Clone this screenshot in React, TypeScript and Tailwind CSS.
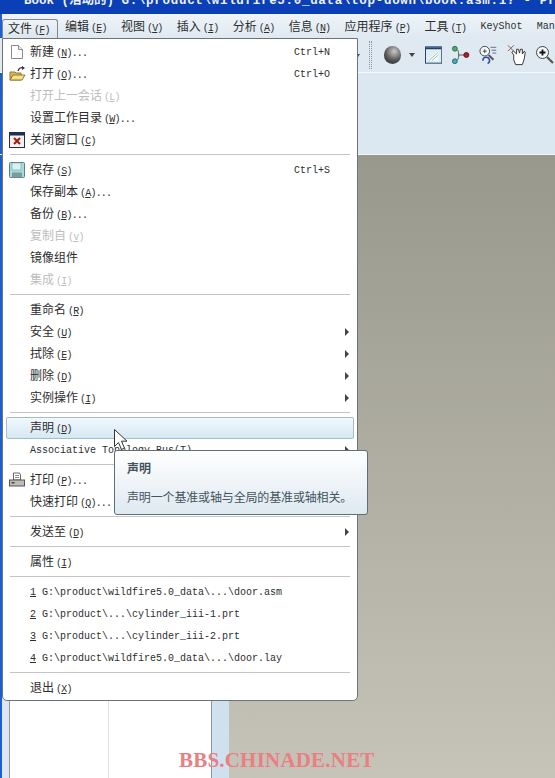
const mono = "font-['Liberation_Mono','Noto_Sans_CJK_SC',monospace]";

type Row =
  | { kind: "sep" }
  | {
      kind?: "item";
      cjk?: string;
      latin?: string;
      key?: string;
      dots?: boolean;
      off?: boolean;
      sub?: boolean;
      short?: string;
      icon?: "new" | "open" | "close" | "save" | "print";
      hot?: boolean;
    };

const rows: Row[] = [
  { cjk: "新建", key: "N", dots: true, short: "Ctrl+N", icon: "new" },
  { cjk: "打开", key: "O", dots: true, short: "Ctrl+O", icon: "open" },
  { cjk: "打开上一会话", key: "L", off: true },
  { cjk: "设置工作目录", key: "W", dots: true },
  { cjk: "关闭窗口", key: "C", icon: "close" },
  { kind: "sep" },
  { cjk: "保存", key: "S", short: "Ctrl+S", icon: "save" },
  { cjk: "保存副本", key: "A", dots: true },
  { cjk: "备份", key: "B", dots: true },
  { cjk: "复制自", key: "v", off: true },
  { cjk: "镜像组件" },
  { cjk: "集成", key: "I", off: true },
  { kind: "sep" },
  { cjk: "重命名", key: "R" },
  { cjk: "安全", key: "U", sub: true },
  { cjk: "拭除", key: "E", sub: true },
  { cjk: "删除", key: "D", sub: true },
  { cjk: "实例操作", key: "I", sub: true },
  { kind: "sep" },
  { cjk: "声明", key: "D", hot: true },
  { latin: "Associative Topology Bus(T)", sub: true },
  { kind: "sep" },
  { cjk: "打印", key: "P", dots: true, icon: "print" },
  { cjk: "快速打印", key: "Q", dots: true },
  { kind: "sep" },
  { cjk: "发送至", key: "D", sub: true },
  { kind: "sep" },
  { cjk: "属性", key: "I" },
  { kind: "sep" },
];

const recent = [
  ["1", "G:\\product\\wildfire5.0_data\\...\\door.asm"],
  ["2", "G:\\product\\...\\cylinder_iii-1.prt"],
  ["3", "G:\\product\\...\\cylinder_iii-2.prt"],
  ["4", "G:\\product\\wildfire5.0_data\\...\\door.lay"],
];

const menus = [
  ["编辑", "E"],
  ["视图", "V"],
  ["插入", "I"],
  ["分析", "A"],
  ["信息", "N"],
  ["应用程序", "P"],
  ["工具", "T"],
];

function Label({ text, k, dots }: { text: string; k?: string; dots?: boolean }) {
  return (
    <span className="mb-[2px] whitespace-nowrap text-[12px]">
      {text}
      {k ? (
        <span className={`${mono} ml-[2px] text-[10px] tracking-[-0.8px]`}>
          (<span className="underline">{k}</span>){dots ? "..." : ""}
        </span>
      ) : null}
    </span>
  );
}

function MenuIcon({ name }: { name: string }) {
  if (name === "new")
    return (
      <svg width="16" height="16" viewBox="0 0 16 16">
        <path d="M2.500 1.500h7l4 4v9h-11z" fill="#fff" stroke="#8a8a8a" />
        <path d="M9.500 1.500v4h4" fill="#eee" stroke="#8a8a8a" />
      </svg>
    );
  if (name === "open")
    return (
      <svg width="17" height="16" viewBox="0 0 17 16">
        <path d="M1 14V6h5l1 1h5v7z" fill="#d9b94f" stroke="#8f7a30" />
        <path d="M1 14l3-5h12l-3 5z" fill="#f6e08d" stroke="#8f7a30" />
        <path d="M9 5c1-3 3-4 5-3" fill="none" stroke="#333" strokeWidth="1.3" />
        <path d="M13 0l3 2-3 2z" fill="#333" />
      </svg>
    );
  if (name === "close")
    return (
      <svg width="16" height="16" viewBox="0 0 16 16">
        <rect x="0.5" y="0.5" width="15" height="15" fill="#f4f2ea" stroke="#1d2f52" />
        <rect x="1" y="1" width="14" height="2.5" fill="#1d2f52" />
        <path d="M5 6l6 6M11 6l-6 6" stroke="#a11818" strokeWidth="2" />
      </svg>
    );
  if (name === "save")
    return (
      <svg width="16" height="16" viewBox="0 0 16 16">
        <rect x="0.5" y="0.5" width="15" height="15" rx="1" fill="#a6dcd8" stroke="#5f7f86" />
        <rect x="3" y="1" width="9" height="7" fill="#d9f2ef" stroke="#7aa0a3" strokeWidth="0.6" />
        <rect x="3" y="10.500" width="10" height="5" fill="#7b9ba0" />
      </svg>
    );
  return (
    <svg width="16" height="16" viewBox="0 0 16 16">
      <path d="M4.500 1h6l1 2v5h-7z" fill="#fff" stroke="#666" />
      <path d="M6 3.500h4M6 5.500h4" stroke="#888" />
      <rect x="0.5" y="8" width="15" height="6" fill="#bdbdb4" stroke="#555" />
      <rect x="2.500" y="10" width="3" height="1.500" fill="#444" />
    </svg>
  );
}

function Arrow() {
  return <span className="ml-auto mr-[4px] h-0 w-0 border-y-[4px] border-l-[4px] border-y-transparent border-l-[#444]" />;
}

function Separator() {
  return <div className="mx-[7px] my-[3px] h-[2px] border-t border-[#c4c4c4] bg-white" />;
}

function MenuRow({ row }: { row: Exclude<Row, { kind: "sep" }> }) {
  const color = row.off ? "text-[#bdbdbd]" : "text-[#2e2e2e]";
  const hot = row.hot
    ? "rounded-[2px] border border-[#a5bccb] bg-gradient-to-b from-[#f2f8fc] to-[#d6e8f3]"
    : "border border-transparent";
  return (
    <div className={`mx-[3px] flex h-[22px] items-center ${hot} ${color}`}>
      <span className="flex w-[23px] shrink-0 items-center justify-start pl-[2px]">
        {row.icon ? <MenuIcon name={row.icon} /> : null}
      </span>
      {row.latin ? (
        <span className={`${mono} whitespace-nowrap text-[10px]`}>{row.latin}</span>
      ) : (
        <Label text={row.cjk ?? ""} k={row.key} dots={row.dots} />
      )}
      {row.short ? <span className={`${mono} ml-auto mr-[23px] text-[10px]`}>{row.short}</span> : null}
      {row.sub ? <Arrow /> : null}
    </div>
  );
}

function Toolbar() {
  return (
    <div className="flex h-[35px] shrink-0 items-center border-b border-[#f3f8fb] bg-[#dfe9f1] pl-[356px]">
      <span className="h-0 w-0 border-x-[2px] border-t-[3px] border-x-transparent border-t-[#444]" />
      <div className="ml-[9px] h-[28px] w-[3px] border-x border-dotted border-[#8d9aa3]" />
      <div className="ml-[12px] h-[18px] w-[18px] rounded-full bg-[radial-gradient(circle_at_60%_30%,#c9c9c9,#555_55%,#222)]" />
      <span className="ml-[8px] h-0 w-0 border-x-[3px] border-t-[4px] border-x-transparent border-t-[#444]" />
      <svg className="ml-[10px]" width="18" height="18" viewBox="0 0 18 18">
        <rect x="0.5" y="0.5" width="17" height="17" fill="#dfeef2" stroke="#1f3f70" />
        <rect x="1" y="1" width="16" height="2" fill="#1f3f70" />
        <path d="M3 15L14 4v11z" fill="#fff" />
        <path d="M4 15l10-9M7 15l7-6" stroke="#7aa" strokeWidth="0.8" />
      </svg>
      <svg className="ml-[9px]" width="20" height="20" viewBox="0 0 20 20">
        <path d="M5 4c2 0 3 2 3 6s-1 6-3 6M8 10h6" fill="none" stroke="#555" />
        <circle cx="4" cy="3.500" r="2.500" fill="#4cae6a" stroke="#2b6b44" />
        <circle cx="4" cy="16.500" r="2.500" fill="#3fb5b0" stroke="#236b68" />
        <circle cx="16" cy="10" r="2.600" fill="#a3232b" stroke="#661118" />
      </svg>
      <svg className="ml-[8px]" width="20" height="22" viewBox="0 0 20 22">
        <circle cx="6" cy="7" r="5" fill="#f5f8fa" stroke="#444" />
        <path d="M4 7h4M6 5v4" stroke="#444" />
        <path d="M10 11l5 5" stroke="#555" strokeWidth="2" />
        <path d="M12 3h6M13 6h5M14 9h4" stroke="#5c6f8c" />
        <path d="M4 17a3.500 3.500 0 1 1 5 3" fill="none" stroke="#2a4fb0" strokeWidth="1.6" />
      </svg>
      <svg className="ml-[9px]" width="22" height="24" viewBox="0 0 22 24">
        <path d="M1 2l6 6M7 2L1 8" stroke="#8a5a4a" />
        <path d="M7 12l-2-3 2-1 3 3 0-5h2l1 4 1-4h2l0 5 2-3 1 1-1 7-2 6h-7l-2-5z" fill="#fff" stroke="#333" strokeLinejoin="round" />
      </svg>
      <svg className="ml-[7px] shrink-0" width="20" height="20" viewBox="0 0 20 20">
        <circle cx="7.500" cy="7.500" r="6" fill="#f5f8fa" stroke="#444" />
        <path d="M4.500 7.500h6M7.500 4.500v6" stroke="#111" strokeWidth="1.800" />
        <path d="M12 12l6 6" stroke="#555" strokeWidth="2.200" />
      </svg>
    </div>
  );
}

export default function App() {
  return (
    <div className="relative flex h-[778px] w-[555px] flex-col overflow-hidden bg-[#dbe7f1] font-['Noto_Sans_CJK_SC',sans-serif]">
      <div className="h-[14px] shrink-0 overflow-hidden bg-[#0b3fb5] pl-[24px]">
        <div className={`${mono} -mt-[6px] whitespace-nowrap text-[12.5px] font-bold leading-[14px] text-[#eef3fb]`}>
          Book (活动的) <span className="tracking-[0.7px]">G:\product\wildfire5.0_data\top-down\book.asm.1? - Pr</span>
        </div>
      </div>
      <div className="flex h-[24px] shrink-0 items-end overflow-hidden border-l-2 border-[#1e5fd0] bg-gradient-to-b from-[#eef4f9] to-[#dfe9f1] text-[#2e2e2e]">
        <div className="flex h-[19px] w-[56px] shrink-0 items-center rounded-t-[3px] border border-b-0 border-[#7d8890] bg-gradient-to-b from-[#eef3f7] to-[#dce6ee] pl-[5px]">
          <Label text="文件" k="F" />
        </div>
        <div className="ml-[7px] flex h-[22px] shrink-0 items-center gap-[14.3px]">
          {menus.map(([label, k]) => (
            <Label key={label} text={label} k={k} />
          ))}
          <span className={`${mono} mb-[2px] text-[10px]`}>KeyShot</span>
          <span className={`${mono} mb-[2px] text-[10px]`}>Manikin</span>
        </div>
      </div>
      <Toolbar />
      <div className="h-[81px] shrink-0 border-l-2 border-[#1e5fd0] bg-[#dbe7f1]" />
      <div className="flex min-h-0 flex-1 border-t border-[#f3f8fb]">
        <div className="w-[2px] bg-[#1e5fd0]" />
        <div className="w-[7px] bg-[#dbe7f1]" />
        <div className="flex w-[203px] border-x border-[#8a98a3] bg-white">
          <div className="w-[99px] border-r border-[#dfe3e6]" />
        </div>
        <div className="w-[17px] bg-[#cfe0ef]" />
        <div className="flex-1 bg-gradient-to-b from-[#99988d] to-[#c6c4b9]" />
      </div>

      {/* file menu */}
      <div className="absolute left-[2px] top-[38px] h-[663px] w-[356px] rounded-b-[5px] border border-[#6d7478] bg-white pt-[2px]">
        {rows.map((row, i) =>
          row.kind === "sep" ? <Separator key={i} /> : <MenuRow key={i} row={row} />,
        )}
        {recent.map(([n, path]) => (
          <div key={n} className={`${mono} mx-[3px] flex h-[22px] items-center pl-[24px] text-[10px] text-[#2e2e2e]`}>
            <span className="underline">{n}</span>
            <span className="ml-[6px]">{path}</span>
          </div>
        ))}
        <Separator />
        <MenuRow row={{ cjk: "退出", key: "X" }} />
      </div>

      {/* mouse pointer */}
      <svg className="absolute left-[113px] top-[428px]" width="15" height="24" viewBox="0 0 15 24">
        <path d="M1.500 1.500v17l4-4 3 7 3-1.300-3-7h5.500z" fill="#fff" stroke="#333" />
      </svg>

      {/* tooltip */}
      <div className="absolute left-[114px] top-[450px] h-[65px] w-[254px] rounded-[3px] border border-[#5f6f78] bg-gradient-to-b from-white to-[#dfe9f1] pl-[12px] text-[#44545e]">
        <div className="mt-[8px] text-[12px] font-bold leading-[18px]">声明</div>
        <div className="mt-[11px] whitespace-nowrap text-[12px] leading-[18px] tracking-[-0.15px]">声明一个基准或轴与全局的基准或轴相关。</div>
      </div>

      <div className="absolute left-[179px] top-[747px] font-['Liberation_Serif',serif] text-[21px] font-bold leading-[26px] tracking-[0.2px] text-[#e97f82]">
        BBS.CHINADE.NET
      </div>
    </div>
  );
}
